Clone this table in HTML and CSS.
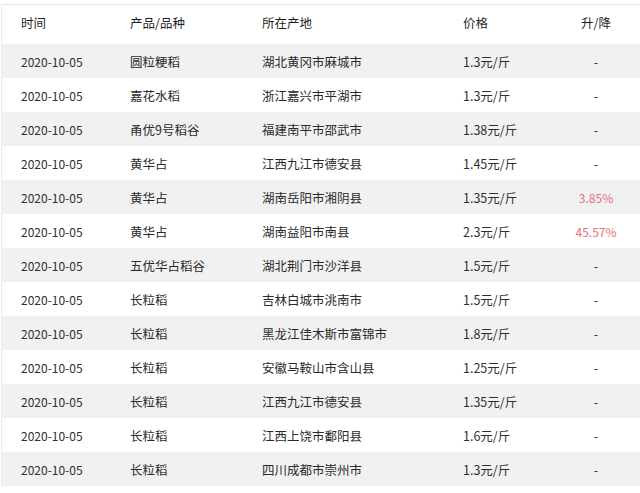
FILE: index.html
```html
<!DOCTYPE html>
<html lang="zh-CN">
<head>
<meta charset="utf-8">
<title>价格表</title>
<link rel="stylesheet" href="styles.css">
</head>
<body>
<div class="table">
  <div class="row head">
    <div>时间</div><div>产品/品种</div><div>所在产地</div><div>价格</div><div class="chg">升/降</div>
  </div>
  <div class="row"><div class="date">2020-10-05</div><div>圆粒粳稻</div><div>湖北黄冈市麻城市</div><div class="price">1.3元/斤</div><div class="chg">-</div></div>
  <div class="row"><div class="date">2020-10-05</div><div>嘉花水稻</div><div>浙江嘉兴市平湖市</div><div class="price">1.3元/斤</div><div class="chg">-</div></div>
  <div class="row"><div class="date">2020-10-05</div><div>甬优9号稻谷</div><div>福建南平市邵武市</div><div class="price">1.38元/斤</div><div class="chg">-</div></div>
  <div class="row"><div class="date">2020-10-05</div><div>黄华占</div><div>江西九江市德安县</div><div class="price">1.45元/斤</div><div class="chg">-</div></div>
  <div class="row"><div class="date">2020-10-05</div><div>黄华占</div><div>湖南岳阳市湘阴县</div><div class="price">1.35元/斤</div><div class="chg up">3.85%</div></div>
  <div class="row"><div class="date">2020-10-05</div><div>黄华占</div><div>湖南益阳市南县</div><div class="price">2.3元/斤</div><div class="chg up">45.57%</div></div>
  <div class="row"><div class="date">2020-10-05</div><div>五优华占稻谷</div><div>湖北荆门市沙洋县</div><div class="price">1.5元/斤</div><div class="chg">-</div></div>
  <div class="row"><div class="date">2020-10-05</div><div>长粒稻</div><div>吉林白城市洮南市</div><div class="price">1.5元/斤</div><div class="chg">-</div></div>
  <div class="row"><div class="date">2020-10-05</div><div>长粒稻</div><div>黑龙江佳木斯市富锦市</div><div class="price">1.8元/斤</div><div class="chg">-</div></div>
  <div class="row"><div class="date">2020-10-05</div><div>长粒稻</div><div>安徽马鞍山市含山县</div><div class="price">1.25元/斤</div><div class="chg">-</div></div>
  <div class="row"><div class="date">2020-10-05</div><div>长粒稻</div><div>江西九江市德安县</div><div class="price">1.35元/斤</div><div class="chg">-</div></div>
  <div class="row"><div class="date">2020-10-05</div><div>长粒稻</div><div>江西上饶市鄱阳县</div><div class="price">1.6元/斤</div><div class="chg">-</div></div>
  <div class="row"><div class="date">2020-10-05</div><div>长粒稻</div><div>四川成都市崇州市</div><div class="price">1.3元/斤</div><div class="chg">-</div></div>
</div>
</body>
</html>
```
FILE: styles.css
```css
html, body {
  margin: 0;
  padding: 0;
  background: #ffffff;
}
body {
  font-family: "Noto Sans CJK SC", "Noto Sans", sans-serif;
  font-size: 12.5px;
  color: #2a2a2a;
}
.table {
  margin-top: 4px;
  border-top: 1px solid #e4e4e4;
  margin-left: 1px;
  border-left: 1px solid #ececec;
}
.row {
  display: grid;
  grid-template-columns: 109px 132px 201px 93px 1fr;
  align-items: center;
  height: 34px;
  padding-left: 19px;
}
.row:nth-child(even) {
  background: #f1f1f1;
}
.row.head {
  height: 39px;
  padding-bottom: 4px;
  box-sizing: border-box;
  background: #ffffff;
  color: #1f1f1f;
}
.date {
  font-size: 12px;
  color: #2f2f2f;
}
.price {
  color: #2f2f2f;
}
.chg {
  text-align: center;
  padding-right: 4px;
}
.chg.up {
  color: #e3727a;
  font-size: 12px;
}
```
